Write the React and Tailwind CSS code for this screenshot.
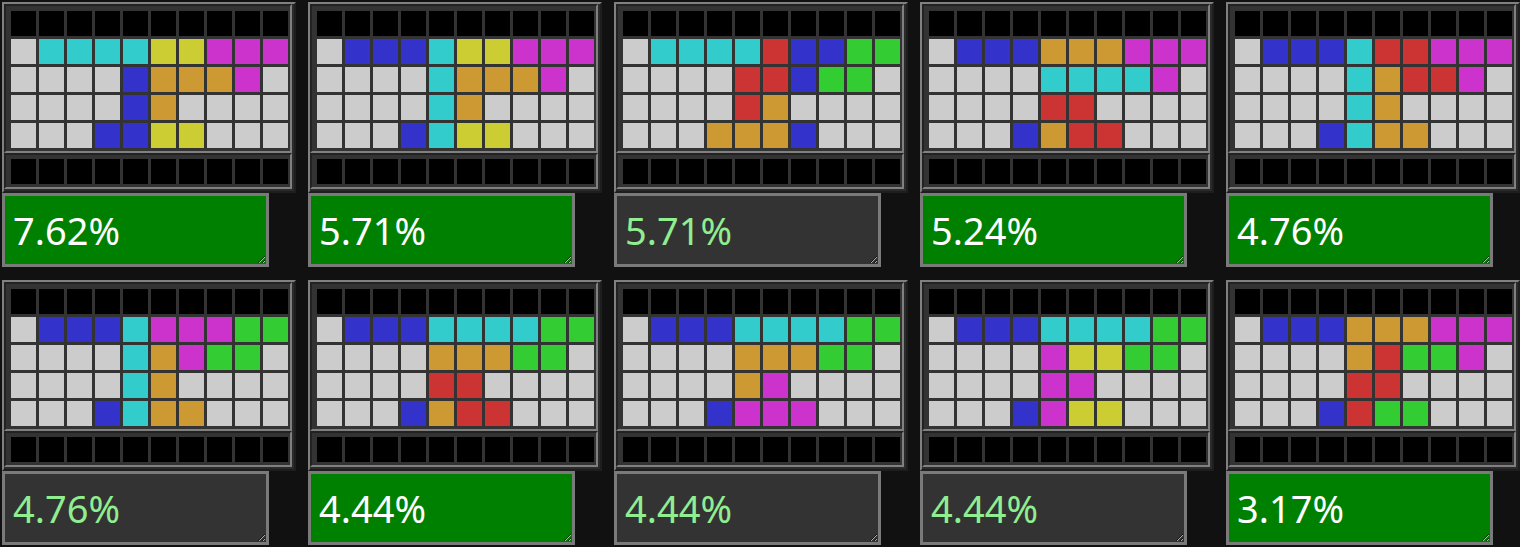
import React from "react";

// cell colours by letter
const COLORS = {
  L: "bg-[#cccccc]",
  C: "bg-[#33cccc]",
  Y: "bg-[#cccc33]",
  M: "bg-[#cc33cc]",
  B: "bg-[#3333cc]",
  O: "bg-[#cc9933]",
  R: "bg-[#cc3333]",
  G: "bg-[#33cc33]",
  K: "bg-black",
};

const results = [
  { pct: "7.62%", best: true, rows: ["LCCCCYYMMM", "LLLLBOOOML", "LLLLBOLLLL", "LLLBBYYLLL"] },
  { pct: "5.71%", best: true, rows: ["LBBBCYYMMM", "LLLLCOOOML", "LLLLCOLLLL", "LLLBCYYLLL"] },
  { pct: "5.71%", best: false, rows: ["LCCCCRBBGG", "LLLLRRBGGL", "LLLLROLLLL", "LLLOOOBLLL"] },
  { pct: "5.24%", best: true, rows: ["LBBBOOOMMM", "LLLLCCCCML", "LLLLRRLLLL", "LLLBORRLLL"] },
  { pct: "4.76%", best: true, rows: ["LBBBCRRMMM", "LLLLCORRML", "LLLLCOLLLL", "LLLBCOOLLL"] },
  { pct: "4.76%", best: false, rows: ["LBBBCMMMGG", "LLLLCOMGGL", "LLLLCOLLLL", "LLLBCOOLLL"] },
  { pct: "4.44%", best: true, rows: ["LBBBCCCCGG", "LLLLOOOGGL", "LLLLRRLLLL", "LLLBORRLLL"] },
  { pct: "4.44%", best: false, rows: ["LBBBCCCCGG", "LLLLOOOGGL", "LLLLOMLLLL", "LLLBMMMLLL"] },
  { pct: "4.44%", best: false, rows: ["LBBBCCCCGG", "LLLLMYYGGL", "LLLLMMLLLL", "LLLBMYYLLL"] },
  { pct: "3.17%", best: true, rows: ["LBBBOOOMMM", "LLLLORGGML", "LLLLRRLLLL", "LLLBRGGLLL"] },
];

const EMPTY = "KKKKKKKKKK";

const Panel = ({ rows, top }) => (
  <div
    className={`border-2 border-t-[#222] border-l-[#222] border-r-[#808080] border-b-[#808080] bg-[#333] pl-[5px] pr-[2px] pb-[3px] ${
      top ? "pt-[5px]" : "pt-[4px]"
    }`}
  >
    <div className="grid grid-cols-[repeat(10,25px)] gap-[3px]">
      {rows.map((row, r) =>
        row.split("").map((c, i) => (
          <div key={`${r}-${i}`} className={`h-[25px] ${COLORS[c]}`} />
        ))
      )}
    </div>
  </div>
);

const Board = ({ pct, best, rows }) => (
  <div className="flex flex-col items-start">
    <div className="w-[294px] border-2 border-t-[#808080] border-l-[#808080] border-r-[#1e1e1e] border-b-[#1e1e1e] bg-[#2b2b2b] pr-[2px] pb-[2px]">
      <Panel rows={[EMPTY, ...rows]} top />
      <Panel rows={[EMPTY]} />
    </div>
    <textarea
      readOnly
      defaultValue={pct}
      className={`block w-[267px] h-[74px] border-[3px] border-[#7a7a7a] pl-[8px] pr-[6px] pt-[6px] pb-[4px] text-[38px] leading-normal font-['Noto_Sans',sans-serif] outline-none ${
        best ? "bg-[#008000] text-white" : "bg-[#333] text-[#90ee90]"
      }`}
    />
  </div>
);

export default function App() {
  return (
    <div className="min-h-screen w-[1520px] bg-[#111] p-[2px]">
      <div className="grid grid-cols-[repeat(5,294px)] gap-x-[12px] gap-y-[13px]">
        {results.map((r, i) => (
          <Board key={i} {...r} />
        ))}
      </div>
    </div>
  );
}
